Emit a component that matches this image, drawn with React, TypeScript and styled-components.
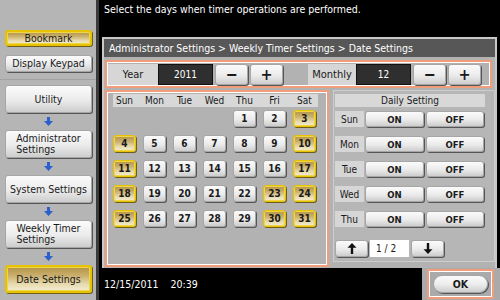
import React from "react";
import styled, { createGlobalStyle, css } from "styled-components";

const FONT = `"DejaVu Sans Condensed", "DejaVu Sans", "Liberation Sans", sans-serif`;

const GlobalStyle = createGlobalStyle`
  html, body {
    margin: 0;
    padding: 0;
    background: #000;
  }
  body {
    font-family: ${FONT};
  }
`;

const raised = css`
  background: linear-gradient(#fbfbfb, #ebebeb 55%, #cdcdcd);
  border: 1px solid #a6a6a6;
  border-radius: 3px;
  box-shadow: 1px 1px 0 #555;
  box-sizing: border-box;
  color: #1a1a1a;
`;

const gold = css`
  background: linear-gradient(#b39447, #c9ae6c 35%, #e6d9ab 70%, #f4eed6);
  border: 1px solid #e6c200;
  border-radius: 3px;
  box-shadow: inset 0 0 0 1px #efd648, 1px 1px 0 #6d5e1c;
  box-sizing: border-box;
  color: #1a1a1a;
`;

const orangeFrame = css`
  border: 2px solid #f19c7a;
  box-shadow: inset 0 0 0 1px #fff;
  box-sizing: border-box;
`;

const Screen = styled.div`
  width: 500px;
  height: 300px;
  display: flex;
  background: #000;
  overflow: hidden;
`;

const Sidebar = styled.div`
  width: 97px;
  background: #b5b5b5;
  border-right: 3px solid #3a3a3a;
  display: flex;
  flex-direction: column;
`;

const SideTop = styled.div`
  height: 79px;
  box-sizing: border-box;
  padding: 30px 4px 0 5px;
  display: flex;
  flex-direction: column;
  gap: 9px;
`;

const SideNav = styled.div`
  border-top: 1px solid #a2a2a2;
  padding: 5px 4px 0 5px;
  display: flex;
  flex-direction: column;
`;

const SideButton = styled.div<{ $active?: boolean; $h: number }>`
  ${(p) => (p.$active ? gold : raised)}
  height: ${(p) => p.$h}px;
  display: flex;
  align-items: center;
  justify-content: center;
  padding: 0 2px;
  font-size: 10.5px;
  line-height: 11px;
  white-space: pre-line;
  ${(p) => p.$active && "border-width: 2px;"}
  span {
    text-align: left;
  }
`;

const ArrowRow = styled.div`
  height: 17px;
  display: flex;
  align-items: center;
  justify-content: center;
`;

const Main = styled.div`
  flex: 1;
  display: flex;
  flex-direction: column;
`;

const Message = styled.div`
  height: 37px;
  box-sizing: border-box;
  padding: 3px 0 0 5px;
  color: #fff;
  font-size: 10.5px;
`;

const Panel = styled.div`
  height: 231px;
  margin: 0 3px;
  border: 2px solid #c8c8c8;
  border-bottom: none;
  box-sizing: border-box;
  background: #b2b2b2;
  display: flex;
  flex-direction: column;
`;

const Crumbs = styled.div`
  height: 18px;
  line-height: 18px;
  background: #575757;
  color: #fff;
  font-size: 10.5px;
  padding-left: 5px;
`;

const Body = styled.div`
  flex: 1;
  padding: 3px 0 0 1px;
  display: grid;
  grid-template-columns: 224px 162px;
  grid-template-rows: 28px 177px;
  column-gap: 4px;
  row-gap: 2px;
`;

const ValueRow = styled.div`
  ${orangeFrame}
  grid-column: 1 / span 2;
  width: 387px;
  display: flex;
  align-items: center;
  padding-left: 1px;
`;

const Group = styled.div<{ $gap?: number }>`
  display: flex;
  align-items: center;
  margin-left: ${(p) => p.$gap ?? 0}px;
`;

const Label = styled.div<{ $w: number }>`
  width: ${(p) => p.$w}px;
  height: 21px;
  background: #d6d6d6;
  display: flex;
  align-items: center;
  justify-content: center;
  font-size: 11px;
  color: #1a1a1a;
`;

const Value = styled.div`
  width: 55px;
  height: 21px;
  box-sizing: border-box;
  background: #2f2f2f;
  border: 1px solid #111;
  color: #fff;
  display: flex;
  align-items: center;
  justify-content: center;
  font-size: 10px;
  margin-right: 2px;
`;

const StepButton = styled.div`
  ${raised}
  width: 33px;
  height: 21px;
  margin-right: 2px;
  display: flex;
  align-items: center;
  justify-content: center;
  font-size: 16px;
  font-weight: bold;
`;

const CalendarBox = styled.div`
  ${orangeFrame}
  padding: 2px 6px 0 6px;
`;

const WeekHead = styled.div`
  height: 13px;
  background: #d8d8d8;
  display: grid;
  grid-template-columns: repeat(7, 23px);
  column-gap: 7px;
  margin-bottom: 3px;
  width: 205px;
  font-size: 10px;
  line-height: 13px;
  color: #1a1a1a;
  text-align: center;
`;

const Days = styled.div`
  display: grid;
  grid-template-columns: repeat(7, 23px);
  grid-auto-rows: 17px;
  column-gap: 7px;
  row-gap: 8px;
`;

const Day = styled.div<{ $off?: boolean; $start?: number }>`
  ${(p) => (p.$off ? gold : raised)}
  ${(p) => p.$start && `grid-column-start: ${p.$start};`}
  display: flex;
  align-items: center;
  justify-content: center;
  font-size: 10px;
  font-weight: bold;
`;

const Daily = styled.div`
  height: 172px;
  box-sizing: border-box;
  border: 1px solid #cdcdcd;
  background: #b6b6b6;
  padding: 3px 1px 0 1px;
  display: flex;
  flex-direction: column;
  gap: 9px;
`;

const DailyHead = styled.div`
  width: 150px;
  height: 13px;
  line-height: 13px;
  background: #d8d8d8;
  text-align: center;
  font-size: 10px;
  color: #1a1a1a;
  margin-bottom: -5px;
`;

const DailyRow = styled.div`
  display: grid;
  grid-template-columns: 29px 59px 59px;
  column-gap: 1px;
  height: 16px;
`;

const DayName = styled.div`
  background: #d6d6d6;
  font-size: 10px;
  display: flex;
  align-items: center;
  justify-content: center;
  color: #1a1a1a;
`;

const Toggle = styled.div`
  ${raised}
  display: flex;
  align-items: center;
  justify-content: center;
  font-size: 9.5px;
  font-weight: bold;
  & + & {
    margin-left: 1px;
  }
`;

const Pager = styled.div`
  display: flex;
  align-items: center;
  gap: 2px;
  margin-top: 4px;
  height: 17px;
`;

const PageButton = styled.div`
  ${raised}
  width: 33px;
  height: 17px;
  display: flex;
  align-items: center;
  justify-content: center;
`;

const PageBox = styled.div`
  width: 39px;
  height: 17px;
  background: #fff;
  display: flex;
  align-items: center;
  padding-left: 6px;
  box-sizing: border-box;
  font-size: 10px;
  color: #1a1a1a;
`;

const Footer = styled.div`
  flex: 1;
  display: flex;
`;

const Clock = styled.div`
  flex: 1;
  color: #fff;
  font-size: 10.5px;
  padding: 10px 0 0 5px;
  span + span {
    margin-left: 12px;
  }
`;

const OkTab = styled.div`
  width: 78px;
  background: #aaaaaa;
  padding: 1px 6px 1px 5px;
  box-sizing: border-box;
  display: flex;
`;

const OkFrame = styled.div`
  ${orangeFrame}
  flex: 1;
  padding: 4px 4px;
  display: flex;
`;

const OkButton = styled.div`
  ${raised}
  flex: 1;
  border-radius: 10px;
  display: flex;
  align-items: center;
  justify-content: center;
  font-size: 10.5px;
  font-weight: bold;
`;

const BlueArrow = () => (
  <svg width="9" height="9" viewBox="0 0 9 9">
    <path d="M3 0h3v4h3L4.5 9 0 4h3z" fill="#2b5fcc" />
  </svg>
);

const PageArrow = ({ up }: { up?: boolean }) => (
  <svg width="10" height="11" viewBox="0 0 10 11" style={{ transform: up ? "rotate(180deg)" : undefined }}>
    <path d="M3.8 0h2.4v6.2H9.5L5 11 0.5 6.2h3.3z" fill="#111" />
  </svg>
);

const weekNames = ["Sun", "Mon", "Tue", "Wed", "Thu", "Fri", "Sat"];
const offDays = [3, 4, 10, 11, 17, 18, 23, 24, 25, 30, 31];
const nav = ["Utility", "Administrator\nSettings", "System Settings", "Weekly Timer\nSettings", "Date Settings"];

export default function App() {
  return (
    <>
      <GlobalStyle />
      <Screen>
        <Sidebar>
          <SideTop>
            <SideButton $active $h={16}>Bookmark</SideButton>
            <SideButton $h={17}>Display Keypad</SideButton>
          </SideTop>
          <SideNav>
            {nav.map((item, i) => (
              <React.Fragment key={item}>
                {i > 0 && (
                  <ArrowRow>
                    <BlueArrow />
                  </ArrowRow>
                )}
                <SideButton $h={28} $active={i === nav.length - 1}>
                  <span>{item}</span>
                </SideButton>
              </React.Fragment>
            ))}
          </SideNav>
        </Sidebar>
        <Main>
          <Message>Select the days when timer operations are performed.</Message>
          <Panel>
            <Crumbs>Administrator Settings &gt; Weekly Timer Settings &gt; Date Settings</Crumbs>
            <Body>
              <ValueRow>
                <Group>
                  <Label $w={50}>Year</Label>
                  <Value>2011</Value>
                  <StepButton>−</StepButton>
                  <StepButton>+</StepButton>
                </Group>
                <Group $gap={23}>
                  <Label $w={48}>Monthly</Label>
                  <Value>12</Value>
                  <StepButton>−</StepButton>
                  <StepButton>+</StepButton>
                </Group>
              </ValueRow>
              <CalendarBox>
                <WeekHead>
                  {weekNames.map((d) => (
                    <span key={d}>{d}</span>
                  ))}
                </WeekHead>
                <Days>
                  {Array.from({ length: 31 }, (_, i) => i + 1).map((d) => (
                    <Day key={d} $off={offDays.includes(d)} $start={d === 1 ? 5 : undefined}>
                      {d}
                    </Day>
                  ))}
                </Days>
              </CalendarBox>
              <Daily>
                <DailyHead>Daily Setting</DailyHead>
                {weekNames.slice(0, 5).map((d) => (
                  <DailyRow key={d}>
                    <DayName>{d}</DayName>
                    <Toggle>ON</Toggle>
                    <Toggle>OFF</Toggle>
                  </DailyRow>
                ))}
                <Pager>
                  <PageButton>
                    <PageArrow up />
                  </PageButton>
                  <PageBox>1 / 2</PageBox>
                  <PageButton>
                    <PageArrow />
                  </PageButton>
                </Pager>
              </Daily>
            </Body>
          </Panel>
          <Footer>
            <Clock>
              <span>12/15/2011</span>
              <span>20:39</span>
            </Clock>
            <OkTab>
              <OkFrame>
                <OkButton>OK</OkButton>
              </OkFrame>
            </OkTab>
          </Footer>
        </Main>
      </Screen>
    </>
  );
}
